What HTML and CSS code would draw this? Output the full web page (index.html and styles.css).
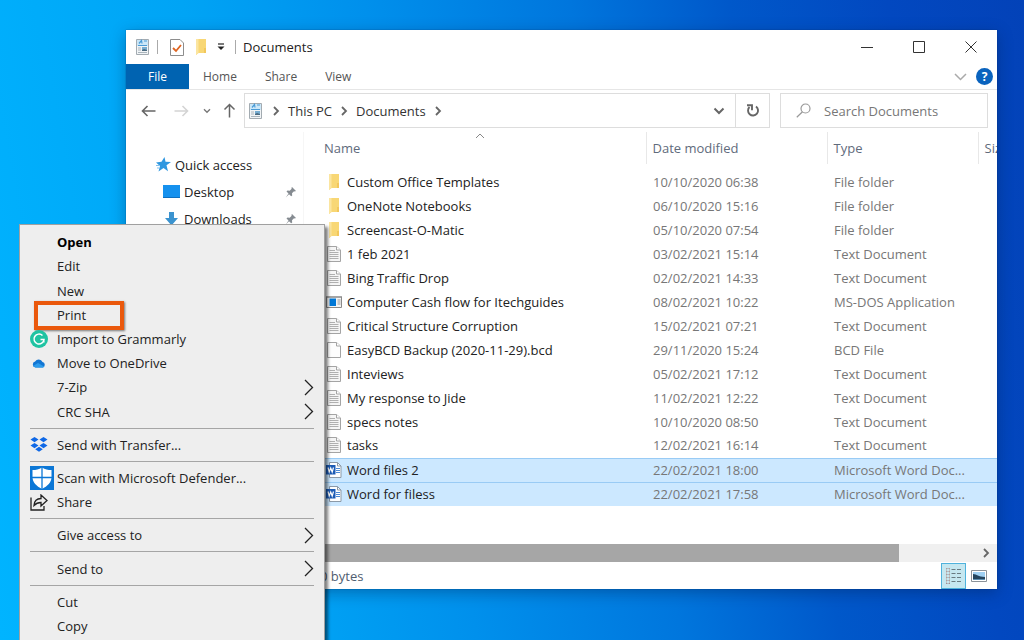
FILE: index.html
```html
<!DOCTYPE html>
<html lang="en">

<head>
    <meta charset="UTF-8">
    <meta name="viewport" content="width=device-width, initial-scale=1.0">
    <title>Documents</title>
    <link rel="stylesheet" href="styles.css">
</head>

<body>
    <svg class="sprite" aria-hidden="true">
        <symbol id="library" viewBox="0 0 16 18">
            <path d="M1.500 1.500h12v15h-12z" fill="#f1f4f6" stroke="#a3abb1" />
            <path d="M2 2h11v6H2z" fill="#cbe7f8" />
            <path d="M4 5.500l2.500-3 .5 3M9 3h3M3 7.500h9" fill="none" stroke="#4a9bd6" stroke-width="1.200" />
            <path d="M3 10h3M3 12h3M3 14.500h9" stroke="#a9b4bc" />
            <path d="M7 9h5v4H7z" fill="#76acd0" />
            <path d="M7 12l2-1 3 1v1H7z" fill="#4b6a80" />
        </symbol>
        <symbol id="folder" viewBox="0 0 12 16">
            <path d="M1 0h10v14H3.500L1 16z" fill="#f8d775" />
            <path d="M1 0h2.500v14L1 16z" fill="#fbe5a0" />
            <path d="M9 9h2v5H9z" fill="#f2c75c" />
        </symbol>
        <symbol id="text" viewBox="0 0 14 16">
            <path d="M.5.5h9l4 3.500v11.500H.5z" fill="#f5f5f5" stroke="#a4a4a4" />
            <path d="M9.500.5V4h4" fill="#fff" stroke="#a4a4a4" />
            <path d="M2.500 4.500H8M2.500 6.500h9M2.500 8.500h9M2.500 10.500h9M2.500 12.500h9" stroke="#b0b0b0" />
        </symbol>
        <symbol id="blank" viewBox="0 0 14 16">
            <path d="M.5.5h9l4 3.500v11.500H.5z" fill="#fdfdfd" stroke="#a4a4a4" />
            <path d="M9.500.5V4h4" fill="#fff" stroke="#a4a4a4" />
        </symbol>
        <symbol id="app" viewBox="0 0 16 14">
            <path d="M.5 1.500h15v11H.5z" fill="#f4f4f4" stroke="#8a8a8a" />
            <path d="M1 1h14v2H1z" fill="#a5a5a5" />
            <path d="M3.500 3.500h6.500V11H3.500z" fill="#0078d7" />
            <path d="M11.500 5h3M11.500 7h3M11.500 9h3" stroke="#999" />
        </symbol>
        <symbol id="word" viewBox="0 0 16 16">
            <path d="M3.500.5h8l3.500 3.500v11.500H3.500z" fill="#fff" stroke="#8c9aa8" />
            <path d="M11.500.5V4H15" fill="none" stroke="#8c9aa8" />
            <path d="M10 6.500h4M10 8.500h4M10 10.500h4" stroke="#4c8ad6" />
            <path d="M0 3h9.500v9.500H0z" fill="#1c5bb5" />
            <path d="M2 5.500l1.200 4.500 1.500-4 1.500 4 1.300-4.500" fill="none" stroke="#fff" stroke-width="1.200" />
        </symbol>
        <symbol id="chevron" viewBox="0 0 8 10">
            <path d="M2 1l4 4-4 4" fill="none" stroke="currentColor" stroke-width="1.800" />
        </symbol>
        <symbol id="down" viewBox="0 0 12 8">
            <path d="M1.500 1.500L6 6l4.500-4.500" fill="none" stroke="currentColor" stroke-width="2" />
        </symbol>
        <symbol id="submenu" viewBox="0 0 10 17">
            <path d="M1 1l7.500 7.500L1 16" fill="none" stroke="currentColor" stroke-width="1.300" />
        </symbol>
        <symbol id="pin" viewBox="0 0 12 12">
            <path d="M7 1l4 4-1.200.6-.8-.3-2 2 .2 2.200-1 .8L4 8.200.8 11.500 3.500 7.500 1.500 5.500l1-.9 2.200.2 2-2-.3-.8z" fill="#858b91" />
        </symbol>
    </svg>

    <main class="desktop">
        <section class="window">
            <header class="titlebar">
                <svg class="library-icon"><use href="#library" /></svg>
                <span class="divider"></span>
                <button class="tool" aria-label="Properties">
                    <svg width="14" height="17" viewBox="0 0 14 17">
                        <path d="M.5.5H10l3.500 3.500v12.500H.5z" fill="#fff" stroke="#8d8d8d" />
                        <path d="M3 9l3 3 5-6" fill="none" stroke="#de6420" stroke-width="1.800" />
                    </svg>
                </button>
                <button class="tool" aria-label="New folder">
                    <svg class="folder-icon"><use href="#folder" /></svg>
                </button>
                <button class="tool" aria-label="Customize toolbar">
                    <svg width="8" height="8" viewBox="0 0 8 8">
                        <path d="M1 1h6" stroke="#222" stroke-width="1.200" />
                        <path d="M.5 3.500h7L4 7z" fill="#222" />
                    </svg>
                </button>
                <span class="divider"></span>
                <h1>Documents</h1>
                <div class="window-buttons">
                    <button aria-label="Minimize">
                        <svg width="12" height="12" viewBox="0 0 12 12"><path d="M0 6.500h12" stroke="#333" /></svg>
                    </button>
                    <button aria-label="Maximize">
                        <svg width="12" height="12" viewBox="0 0 12 12"><path d="M.5.5h11v11H.5z" fill="none" stroke="#333" /></svg>
                    </button>
                    <button aria-label="Close">
                        <svg width="12" height="12" viewBox="0 0 12 12"><path d="M.5.5l11 11M11.500.5l-11 11" stroke="#333" /></svg>
                    </button>
                </div>
            </header>

            <nav class="ribbon">
                <button class="tab file">File</button>
                <button class="tab">Home</button>
                <button class="tab">Share</button>
                <button class="tab">View</button>
                <div class="ribbon-end">
                    <button class="expand" aria-label="Expand the ribbon">
                        <svg width="13" height="8" viewBox="0 0 13 8"><path d="M1 1l5.500 5.500L12 1" fill="none" stroke="#aaa" stroke-width="1.500" /></svg>
                    </button>
                    <button class="help" aria-label="Help">?</button>
                </div>
            </nav>

            <div class="location">
                <div class="history">
                    <button aria-label="Back">
                        <svg width="15" height="12" viewBox="0 0 15 12"><path d="M14.500 6H1.500M6.500 1l-5 5 5 5" fill="none" stroke="#666" stroke-width="1.600" /></svg>
                    </button>
                    <button aria-label="Forward">
                        <svg width="15" height="12" viewBox="0 0 15 12"><path d="M.5 6h13M8.500 1l5 5-5 5" fill="none" stroke="#d4d4d4" stroke-width="1.600" /></svg>
                    </button>
                    <button class="recent" aria-label="Recent locations">
                        <svg width="8" height="6"><use href="#down" /></svg>
                    </button>
                    <button class="up" aria-label="Up">
                        <svg width="13" height="15" viewBox="0 0 13 15"><path d="M6.500 14.500v-13M1.500 6.500l5-5 5 5" fill="none" stroke="#666" stroke-width="1.500" /></svg>
                    </button>
                </div>
                <div class="address">
                    <svg class="library-icon"><use href="#library" /></svg>
                    <svg class="chevron"><use href="#chevron" /></svg>
                    <a href="#">This PC</a>
                    <svg class="chevron"><use href="#chevron" /></svg>
                    <a href="#">Documents</a>
                    <svg class="chevron"><use href="#chevron" /></svg>
                    <button class="previous" aria-label="Previous locations">
                        <svg width="12" height="8"><use href="#down" /></svg>
                    </button>
                    <button class="refresh" aria-label="Refresh">
                        <svg width="14" height="14" viewBox="0 0 14 14">
                            <path d="M10 2.500a5 5 0 1 1-6.500.5" fill="none" stroke="#666" stroke-width="1.900" />
                            <path d="M1 1.200h5v5" fill="none" stroke="#666" stroke-width="1.900" />
                        </svg>
                    </button>
                </div>
                <label class="search">
                    <svg width="15" height="15" viewBox="0 0 15 15">
                        <circle cx="9.500" cy="5.500" r="4.500" fill="none" stroke="#999" stroke-width="1.200" />
                        <path d="M6.500 8.700L.8 14.300" stroke="#999" stroke-width="1.200" />
                    </svg>
                    <input type="search" placeholder="Search Documents" aria-label="Search Documents">
                </label>
            </div>

            <div class="content">
                <aside class="places">
                    <a class="place root" href="#">
                        <svg width="15" height="15" viewBox="0 0 15 15">
                            <path d="M8.500 0l1 4.800 5.500.2-4.500 3.200 1.500 6L7.500 11l-5 3.500L4 9 0 5.500l5.500-.7z" fill="#2f97e0" />
                            <path d="M0 8.500h3M1 11h2" stroke="#7fc1ee" />
                        </svg>
                        Quick access
                    </a>
                    <a class="place" href="#">
                        <svg width="17" height="13" viewBox="0 0 17 13"><path d="M0 0h17v13H0z" fill="#1591ee" /><path d="M0 12.500h17" stroke="#0d6fc0" /></svg>
                        Desktop
                        <svg class="pin"><use href="#pin" /></svg>
                    </a>
                    <a class="place" href="#">
                        <svg width="17" height="14" viewBox="0 0 17 14"><path d="M6 0h5v6h4l-6.500 7.500L2 6h4z" fill="#3b93cf" /></svg>
                        Downloads
                        <svg class="pin"><use href="#pin" /></svg>
                    </a>
                </aside>

                <div class="listing">
                    <table class="files">
                        <thead>
                            <tr>
                                <th class="name">Name
                                    <svg class="sort" width="10" height="6" viewBox="0 0 10 6"><path d="M1 5l4-4 4 4" fill="none" stroke="#888" /></svg>
                                </th>
                                <th class="date">Date modified</th>
                                <th class="type">Type</th>
                                <th class="size">Size</th>
                            </tr>
                        </thead>
                        <tbody>
                            <tr><td><svg class="folder-icon"><use href="#folder" /></svg>Custom Office Templates</td><td>10/10/2020 06:38</td><td>File folder</td><td></td></tr>
                            <tr><td><svg class="folder-icon"><use href="#folder" /></svg>OneNote Notebooks</td><td>06/10/2020 15:16</td><td>File folder</td><td></td></tr>
                            <tr><td><svg class="folder-icon"><use href="#folder" /></svg>Screencast-O-Matic</td><td>05/10/2020 07:54</td><td>File folder</td><td></td></tr>
                            <tr><td><svg><use href="#text" /></svg>1 feb 2021</td><td>03/02/2021 15:14</td><td>Text Document</td><td></td></tr>
                            <tr><td><svg><use href="#text" /></svg>Bing Traffic Drop</td><td>02/02/2021 14:33</td><td>Text Document</td><td></td></tr>
                            <tr><td><svg><use href="#app" /></svg>Computer Cash flow for Itechguides</td><td>08/02/2021 10:22</td><td>MS-DOS Application</td><td></td></tr>
                            <tr><td><svg><use href="#text" /></svg>Critical Structure Corruption</td><td>15/02/2021 07:21</td><td>Text Document</td><td></td></tr>
                            <tr><td><svg><use href="#blank" /></svg>EasyBCD Backup (2020-11-29).bcd</td><td>29/11/2020 15:24</td><td>BCD File</td><td></td></tr>
                            <tr><td><svg><use href="#text" /></svg>Inteviews</td><td>05/02/2021 17:12</td><td>Text Document</td><td></td></tr>
                            <tr><td><svg><use href="#text" /></svg>My response to Jide</td><td>11/02/2021 12:22</td><td>Text Document</td><td></td></tr>
                            <tr><td><svg><use href="#text" /></svg>specs notes</td><td>10/10/2020 08:50</td><td>Text Document</td><td></td></tr>
                            <tr><td><svg><use href="#text" /></svg>tasks</td><td>12/02/2021 16:14</td><td>Text Document</td><td></td></tr>
                            <tr class="selected"><td><svg><use href="#word" /></svg>Word files 2</td><td>22/02/2021 18:00</td><td>Microsoft Word Doc...</td><td></td></tr>
                            <tr class="selected"><td><svg><use href="#word" /></svg>Word for filess</td><td>22/02/2021 17:58</td><td>Microsoft Word Doc...</td><td></td></tr>
                        </tbody>
                    </table>
                    <div class="scrollbar">
                        <div class="thumb"></div>
                        <button aria-label="Scroll right"><svg class="chevron"><use href="#chevron" /></svg></button>
                    </div>
                </div>
            </div>

            <footer class="status">
                <span class="bytes">0 bytes</span>
                <button class="view active" aria-label="Details">
                    <svg width="17" height="17" viewBox="0 0 17 17">
                        <path d="M1 1.500h4M1 4.500h4M1 7.500h4M1 10.500h4M1 13.500h4M1 16.500h4" stroke="#a08d92" stroke-dasharray="1.500 1" />
                        <path d="M1.500 1v15M4.500 1v15" stroke="#b9a9a5" stroke-width=".6" />
                        <path d="M6.500 2.500h4M12 2.500h4M6.500 6.500h4M12 6.500h4M6.500 10.500h4M12 10.500h4M6.500 14.500h4M12 14.500h4" stroke="#697b82" />
                    </svg>
                </button>
                <button class="view" aria-label="Large icons">
                    <svg width="16" height="12" viewBox="0 0 16 12">
                        <path d="M.5.5h15v11H.5z" fill="#fff" stroke="#8b9299" />
                        <path d="M2 2h12v8H2z" fill="#9fd0f3" />
                        <path d="M2 4c4 0 5 3 12 3v3H2z" fill="#23445e" />
                        <path d="M2 9h12v1H2z" fill="#5b8db0" />
                    </svg>
                </button>
            </footer>
        </section>

        <div class="menu" role="menu">
            <button class="item default" role="menuitem">Open</button>
            <button class="item" role="menuitem">Edit</button>
            <button class="item" role="menuitem">New</button>
            <button class="item highlighted" role="menuitem">Print</button>
            <button class="item" role="menuitem">
                <svg class="icon" width="18" height="18" viewBox="0 0 18 18">
                    <circle cx="9" cy="9" r="9" fill="#1fc3a2" />
                    <path d="M12.500 5.500A5 5 0 1 0 14 9.500h-3.500M13.800 9.500v3" fill="none" stroke="#fff" stroke-width="1.500" />
                </svg>
                Import to Grammarly
            </button>
            <button class="item" role="menuitem">
                <svg class="icon" width="18" height="9" viewBox="0 0 18 9">
                    <path d="M5.500 8.500a3 3 0 0 1-.4-5.900A4.200 4.200 0 0 1 12.500 3a2.900 2.900 0 0 1 .5 5.500z" fill="#1276d3" />
                    <path d="M3 7l5-3 6.500 3.800-1.500.7H5.500z" fill="#2c9cec" />
                </svg>
                Move to OneDrive
            </button>
            <button class="item" role="menuitem">7-Zip<svg class="submenu"><use href="#submenu" /></svg></button>
            <button class="item" role="menuitem">CRC SHA<svg class="submenu"><use href="#submenu" /></svg></button>
            <hr>
            <button class="item" role="menuitem">
                <svg class="icon" width="18" height="15" viewBox="0 0 18 15">
                    <path d="M4.500 0L8.500 2.600 4.500 5.200.5 2.600zM13.500 0l4 2.600-4 2.600-4-2.600zM4.500 6l4 2.600-4 2.600-4-2.600zM13.500 6l4 2.600-4 2.600-4-2.600zM9 9.800l3.800 2.500L9 14.800l-3.800-2.500z" fill="#0f68e6" />
                </svg>
                Send with Transfer...
            </button>
            <hr>
            <button class="item" role="menuitem">
                <svg class="icon" width="24" height="24" viewBox="0 0 24 24">
                    <path d="M0 0h24v24H0z" fill="#0b77d6" />
                    <path d="M12 1.500c3 2 6 2.500 9.500 2.500v7c0 5.500-4 9-9.500 12-5.500-3-9.500-6.500-9.500-12V4C6 4 9 3.500 12 1.500z" fill="#fff" />
                    <path d="M12 1v22M2 11.500h20" stroke="#0b77d6" stroke-width="1.300" />
                </svg>
                Scan with Microsoft Defender...
            </button>
            <button class="item" role="menuitem">
                <svg class="icon" width="18" height="17" viewBox="0 0 18 17">
                    <path d="M1 3.500v12.500h13v-4" fill="none" stroke="#222" stroke-width="1.300" />
                    <path d="M4 11.500c.3-4.500 3-7 7-7V1l6 5.500-6 5.500V8.500c-3 0-5 .8-7 3z" fill="none" stroke="#222" stroke-width="1.300" />
                </svg>
                Share
            </button>
            <hr>
            <button class="item" role="menuitem">Give access to<svg class="submenu"><use href="#submenu" /></svg></button>
            <hr>
            <button class="item" role="menuitem">Send to<svg class="submenu"><use href="#submenu" /></svg></button>
            <hr>
            <button class="item" role="menuitem">Cut</button>
            <button class="item" role="menuitem">Copy</button>
        </div>
    </main>
</body>

</html>
```

FILE: styles.css
```css
* {
    box-sizing: border-box;
}

body {
    margin: 0;
    color: #222;
    font-family: 'Segoe UI', 'Open Sans', 'Noto Sans', sans-serif;
    font-size: 13px;
}

button,
input {
    padding: 0;
    border: 0;
    background: none;
    color: inherit;
    font: inherit;
}

a {
    color: inherit;
    text-decoration: none;
}

svg {
    flex: none;
}

.sprite {
    position: absolute;
    width: 0;
    height: 0;
}

.desktop {
    position: relative;
    display: flex;
    min-height: 100vh;
    padding: 30px 27px 51px 126px;
    overflow: hidden;
    background-image: linear-gradient(80deg, #00b4ff 0%, #00a4f5 26%, #0090ec 42%, #0076dd 60%, #0058ca 74%, #0248c0 88%, #0342b8 100%);
}

.window {
    display: flex;
    flex: 1;
    flex-direction: column;
    min-width: 0;
    background-color: #fff;
    box-shadow: 0 0 1px #002050a0, 0 4px 14px #00205060;
    overflow: hidden;
}

/* Title bar */
.titlebar {
    display: flex;
    align-items: center;
    height: 34px;
    padding-left: 9px;
}

.library-icon {
    width: 16px;
    height: 18px;
}

.folder-icon {
    width: 12px;
    height: 16px;
}

.divider {
    width: 1px;
    height: 14px;
    margin: 0 7px 0 6px;
    background-color: #aaa;
}

.tool {
    display: flex;
    justify-content: center;
    width: 24px;
}

.tool:last-of-type {
    width: 16px;
}

h1 {
    margin: 0;
    font-size: 13px;
    font-weight: 400;
}

.window-buttons {
    display: flex;
    align-self: stretch;
    margin-left: auto;
}

.window-buttons button {
    display: grid;
    place-items: center;
    width: 52px;
}

/* Ribbon */
.ribbon {
    display: flex;
    height: 26px;
    border-bottom: 1px solid #e6e6e6;
    color: #555;
    font-size: 12px;
}

.tab {
    padding: 0 14px;
}

.tab.file {
    width: 63px;
    background-color: #0063b1;
    color: #fff;
}

.ribbon-end {
    display: flex;
    align-items: center;
    gap: 9px;
    margin-left: auto;
    padding-right: 4px;
}

.help {
    width: 17px;
    height: 17px;
    border-radius: 50%;
    background-color: #0a63be;
    color: #fff;
    font-weight: 700;
    line-height: 17px;
}

/* Address bar */
.location {
    display: flex;
    height: 42px;
    padding: 3px 9px 4px 15px;
}

.history {
    display: flex;
    align-items: center;
    gap: 18px;
    width: 103px;
    color: #777;
}

.history svg,
.previous svg {
    display: block;
}

.history .recent {
    margin-left: -4px;
}

.history .up {
    margin-left: -6px;
}

.address {
    display: flex;
    flex: 1;
    align-items: center;
    gap: 8px;
    padding-left: 3px;
    border: 1px solid #ddd;
    color: #333;
}

.chevron {
    width: 8px;
    height: 10px;
    color: #666;
}

.previous {
    margin-left: auto;
    padding-right: 2px;
    color: #666;
}

.refresh {
    display: grid;
    align-self: stretch;
    place-items: center;
    width: 34px;
    border-left: 1px solid #ddd;
}

.search {
    display: flex;
    align-items: center;
    gap: 13px;
    width: 208px;
    margin-left: 10px;
    padding-left: 15px;
    border: 1px solid #ddd;
}

.search input {
    flex: 1;
    min-width: 0;
    outline: 0;
}

.search input::placeholder {
    color: #777;
    opacity: 1;
}

/* Places and files */
.content {
    display: flex;
    flex: 1;
}

.places {
    width: 178px;
    padding: 19px 6px 0 30px;
    border-right: 1px solid #f6f6f6;
}

.place {
    display: flex;
    align-items: center;
    gap: 4px;
    height: 27px;
    padding-left: 7px;
}

.place.root {
    padding-left: 0;
}

.pin {
    width: 12px;
    height: 12px;
    margin-left: auto;
}

.listing {
    display: flex;
    flex: 1;
    flex-direction: column;
    justify-content: space-between;
    min-width: 0;
    padding-left: 13px;
}

.files {
    width: 100%;
    border-collapse: collapse;
    table-layout: fixed;
    color: #777;
}

.files th {
    position: relative;
    height: 32px;
    padding: 0 0 0 6px;
    border-left: 1px solid #e8e8e8;
    color: #5f6b7c;
    font-weight: 400;
    text-align: left;
    white-space: nowrap;
    overflow: hidden;
}

.files th.name {
    padding-left: 7px;
    border-left: 0;
}

.date {
    width: 181px;
}

.type {
    width: 151px;
}

.size {
    width: 19px;
}

.sort {
    position: absolute;
    top: 1px;
    left: 48%;
}

.files tbody::before {
    content: '';
    display: block;
    height: 6px;
}

.files td {
    height: 24px;
    padding: 0 0 0 7px;
    line-height: 23px;
    white-space: nowrap;
}

.files td:first-child {
    padding-left: 9px;
    color: #222;
}

.files td svg {
    width: 16px;
    height: 16px;
    margin-right: 5px;
    vertical-align: -3px;
}

.selected td {
    border-top: 1px solid #99cbf5;
    background-color: #cce8ff;
}

.scrollbar {
    display: flex;
    height: 18px;
    background-color: #f0f0f0;
}

.thumb {
    flex: 1;
    background-color: #a6a6a6;
}

.scrollbar button {
    width: 98px;
    padding-right: 7px;
    text-align: right;
}

/* Status bar */
.status {
    display: flex;
    align-items: center;
    height: 27px;
    padding-right: 6px;
    color: #4f5d70;
}

.bytes {
    flex: 1;
    padding-left: 194px;
}

.view {
    display: grid;
    place-items: center;
    width: 25px;
    height: 26px;
}

.view.active {
    border: 1px solid #4fb2dc;
    background-color: #c5e7f0;
}

/* Context menu */
.menu {
    position: absolute;
    top: 224px;
    bottom: 0;
    left: 19px;
    display: flex;
    flex-direction: column;
    width: 306px;
    padding: 5px 10px 2px;
    border: 1px solid #a0a0a0;
    border-bottom: 0;
    background-color: #eee;
    box-shadow: 3px 3px 3px #00000080;
}

.item {
    position: relative;
    display: flex;
    flex: 1;
    align-items: center;
    padding-left: 27px;
    text-align: left;
}

.item.default {
    color: #000;
    font-weight: 700;
}

.item .icon {
    position: absolute;
    left: 0;
}

.submenu {
    width: 10px;
    height: 17px;
    margin-left: auto;
}

.menu hr {
    width: 100%;
    margin: 4px 0;
    border: 0;
    border-top: 1px solid #a5a5a5;
}

.highlighted::after {
    content: '';
    position: absolute;
    top: -2px;
    bottom: -3px;
    left: 4px;
    width: 82px;
    border: 4px solid #ea580c;
    box-shadow: 1px 1px 2px #00000080;
}
```
